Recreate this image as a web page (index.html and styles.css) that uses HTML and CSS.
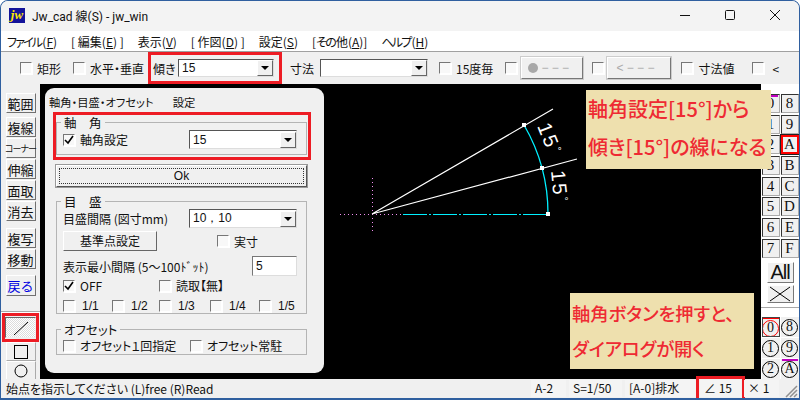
FILE: index.html
```html
<!DOCTYPE html>
<html lang="ja">
<head>
    <meta charset="UTF-8">
    <title>Jw_cad 線(S) - jw_win</title>
    <link rel="stylesheet" href="styles.css">
</head>
<body>
<div class="window">
    <!-- Title bar -->
    <div class="titlebar">
        <span class="app-icon">jw</span>
        <span class="title-text">Jw_cad 線(S) - jw_win</span>
        <div class="win-controls">
            <svg width="12" height="12" viewBox="0 0 12 12"><path d="M1 6.5h10" stroke="#111" fill="none"/></svg>
            <svg width="12" height="12" viewBox="0 0 12 12"><rect x="1.5" y="1.5" width="9" height="9" rx="1" stroke="#111" fill="none"/></svg>
            <svg width="12" height="12" viewBox="0 0 12 12"><path d="M1 1l10 10M11 1L1 11" stroke="#111" fill="none"/></svg>
        </div>
    </div>

    <!-- Menu -->
    <div class="menubar">
        <span><span class="kana">ファイル</span>(<u>F</u>)</span>
        <span>[ 編集(<u>E</u>) ]</span>
        <span>表示(<u>V</u>)</span>
        <span>[ 作図(<u>D</u>) ]</span>
        <span>設定(<u>S</u>)</span>
        <span>[<span class="kana">その</span>他(<u>A</u>)]</span>
        <span><span class="kana">ヘルプ</span>(<u>H</u>)</span>
    </div>

    <!-- Tool options -->
    <div class="toolbar">
        <label class="check tb-rect"><span class="cb"></span>矩形</label>
        <label class="check tb-horiz"><span class="cb"></span>水平・垂直</label>
        <div class="hl-tilt">
            <span>傾き</span>
            <div class="combo combo-tilt"><span class="combo-value">15</span><span class="combo-arrow"></span></div>
        </div>
        <span class="tb-size">寸法</span>
        <div class="combo combo-size"><span class="combo-value"></span><span class="combo-arrow"></span></div>
        <label class="check tb-15"><span class="cb"></span>15度毎</label>
        <span class="cb tb-c1"></span>
        <div class="gray-btn gb-1"><i class="dot"></i>− − −</div>
        <span class="cb tb-c2"></span>
        <div class="gray-btn gb-2">&lt; − − −</div>
        <label class="check tb-val"><span class="cb"></span>寸法値</label>
        <label class="check tb-lt"><span class="cb"></span>&lt;</label>
    </div>

    <div class="main">
        <!-- Left tools -->
        <div class="left-tools">
            <div class="tool-btn tool-first">範囲</div>
            <div class="tool-group">
                <div class="tool-btn">複線</div>
                <div class="tool-btn tool-narrow">コーナー</div>
                <div class="tool-btn">伸縮</div>
                <div class="tool-btn">面取</div>
                <div class="tool-btn">消去</div>
            </div>
            <div class="tool-group">
                <div class="tool-btn">複写</div>
                <div class="tool-btn">移動</div>
            </div>
            <div class="tool-btn tool-back">戻る</div>
            <div class="tool-sep"></div>
            <div class="draw-tools">
                <div class="hl-line">
                    <div class="draw-btn draw-active">
                        <svg width="20" height="16" viewBox="0 0 20 16"><path d="M3 15L17 2" stroke="#000" fill="none"/></svg>
                    </div>
                </div>
                <div class="draw-btn">
                    <svg width="16" height="14" viewBox="0 0 16 14"><rect x="1.5" y="0.5" width="13" height="13" stroke="#000" fill="none"/></svg>
                </div>
                <div class="draw-btn">
                    <svg width="16" height="14" viewBox="0 0 16 14"><circle cx="8" cy="7" r="6" stroke="#000" fill="none"/></svg>
                </div>
            </div>
        </div>

        <!-- Drawing area -->
        <div class="canvas">
            <svg class="drawing" width="721" height="294" viewBox="40 84 721 294">
                <path d="M340 214.5H403M372.5 178V234" stroke="#f08ff0" stroke-dasharray="1 3" fill="none"/>
                <path d="M372 214L553 109M372 214L577 159" stroke="#fff" stroke-width="1.2" fill="none"/>
                <path d="M403 214.5H548" stroke="#00f0ff" stroke-dasharray="24 2 2 2" fill="none"/>
                <path d="M548 214A176 176 0 0 0 524 125" stroke="#00f0ff" stroke-width="1.3" fill="none"/>
                <path d="M522 123h4v4h-4zM540 166h4v4h-4zM546 212h4v4h-4z" fill="#fff"/>
                <text class="dim" transform="translate(537 126) rotate(68)">15<tspan class="deg" dy="-7" dx="1">°</tspan></text>
                <text class="dim" transform="translate(551 171) rotate(84)">15<tspan class="deg" dy="-7" dx="1">°</tspan></text>
            </svg>

            <!-- Dialog -->
            <div class="dialog">
                <div class="dialog-title"><span>軸角・目盛・オフセット</span><span>設定</span></div>

                <div class="hl-group">
                    <fieldset class="group group-angle">
                        <legend>軸　角</legend>
                        <div class="row row-angle">
                            <label class="check"><span class="cb"><svg width="10" height="10" viewBox="0 0 10 10"><path d="M1 5l3 3 5-7" stroke="#000" stroke-width="1.6" fill="none"/></svg></span>軸角設定</label>
                            <div class="combo combo-dlg"><span class="combo-value">15</span><span class="combo-arrow"></span></div>
                        </div>
                    </fieldset>
                </div>

                <div class="ok-btn"><span>Ok</span></div>

                <fieldset class="group group-scale">
                    <legend>目　盛</legend>
                    <div class="row">
                        <span>目盛間隔 (図寸mm)</span>
                        <div class="combo combo-dlg"><span class="combo-value">10，10</span><span class="combo-arrow"></span></div>
                    </div>
                    <div class="row row-base">
                        <div class="base-btn">基準点設定</div>
                        <label class="check check-real"><span class="cb"></span>実寸</label>
                    </div>
                    <div class="row row-min">
                        <span>表示最小間隔 (5～100ﾄﾞｯﾄ)</span>
                        <div class="text-input">5</div>
                    </div>
                    <div class="row row-off">
                        <label class="check check-off"><span class="cb"><svg width="10" height="10" viewBox="0 0 10 10"><path d="M1 5l3 3 5-7" stroke="#000" stroke-width="1.6" fill="none"/></svg></span>OFF</label>
                        <label class="check"><span class="cb"></span>読取【無】</label>
                    </div>
                    <div class="row-ratio">
                        <label class="check"><span class="cb"></span>1/1</label>
                        <label class="check"><span class="cb"></span>1/2</label>
                        <label class="check"><span class="cb"></span>1/3</label>
                        <label class="check"><span class="cb"></span>1/4</label>
                        <label class="check"><span class="cb"></span>1/5</label>
                    </div>
                </fieldset>

                <fieldset class="group group-offset">
                    <legend>オフセット</legend>
                    <div class="row row-offset">
                        <label class="check check-once"><span class="cb"></span>オフセット１回指定</label>
                        <label class="check"><span class="cb"></span>オフセット常駐</label>
                    </div>
                </fieldset>
            </div>
        </div>

        <!-- Right tools -->
        <div class="right-tools">
            <div class="layer-grid">
                <div class="layer-btn has-bar">0</div><div class="layer-btn">8</div>
                <div class="layer-btn">1</div><div class="layer-btn">9</div>
                <div class="layer-btn">2</div><div class="layer-btn layer-on">A</div>
                <div class="layer-btn">3</div><div class="layer-btn">B</div>
                <div class="layer-btn">4</div><div class="layer-btn">C</div>
                <div class="layer-btn">5</div><div class="layer-btn">D</div>
                <div class="layer-btn">6</div><div class="layer-btn">E</div>
                <div class="layer-btn">7</div><div class="layer-btn">F</div>
            </div>
            <div class="big-btn big-all">All</div>
            <div class="big-btn">
                <svg width="22" height="16" viewBox="0 0 22 16"><path d="M1 1l10 7 10-7M1 15l10-7 10 7" stroke="#000" fill="none"/></svg>
            </div>
            <div class="tool-sep"></div>
            <div class="group-grid">
                <div class="circ-btn circ-on"><span>0</span></div><div class="circ-btn"><span>8</span></div>
                <div class="circ-btn"><span>1</span></div><div class="circ-btn"><span>9</span></div>
                <div class="circ-btn"><span>2</span></div><div class="circ-btn circ-bar"><span>A</span></div>
            </div>
        </div>

        <!-- Notes laid over the screen -->
        <div class="note note-top">
            <p>軸角設定[15°]から</p>
            <p>傾き[15°]の線になる</p>
        </div>
        <div class="note note-bottom">
            <p>軸角ボタンを押すと、</p>
            <p>ダイアログが開く</p>
        </div>
    </div>

    <!-- Status bar -->
    <div class="statusbar">
        <span class="status-msg">始点を指示してください (L)free (R)Read</span>
        <span class="st st-layer">A-2</span>
        <span class="st st-scale">S=1/50</span>
        <span class="st st-name">[A-0]排水</span>
        <span class="st st-angle">∠ 15</span>
        <span class="st st-mult">× 1</span>
        <svg class="grip" width="13" height="13" viewBox="0 0 13 13"><path d="M12 1L1 12M12 5L5 12M12 9L9 12" stroke="#909090" stroke-width="1.5" fill="none"/></svg>
    </div>
</div>
</body>
</html>
```

FILE: styles.css
```css
* {
    box-sizing: border-box;
}

body {
    margin: 0;
    background: #fff;
    font-family: "Noto Sans CJK JP", "Liberation Sans", sans-serif;
    font-size: 12px;
    color: #111;
    font-feature-settings: "palt";
}

.window {
    width: 800px;
    height: 400px;
    display: flex;
    flex-direction: column;
    overflow: hidden;
    background: #f0f0f0;
    border: 1px solid #2f5f9f;
    border-bottom-width: 2px;
    border-radius: 8px 8px 0 0;
}

/* Title bar */
.titlebar {
    height: 30px;
    flex: none;
    display: flex;
    align-items: center;
    padding: 0 0 2px 8px;
    background: #f3f3f3;
}

.app-icon {
    width: 16px;
    height: 15px;
    background: #14149a;
    color: #ffe800;
    font: italic bold 13px/13px "Liberation Serif", serif;
    text-align: center;
}

.title-text {
    margin-left: 7px;
    font-family: Roboto, "Noto Sans CJK JP", sans-serif;
    font-size: 12px;
}

.win-controls {
    margin-left: auto;
    margin-right: 18px;
    display: flex;
    gap: 33px;
}

/* Menu */
.menubar {
    height: 21px;
    flex: none;
    display: flex;
    align-items: center;
    gap: 14px;
    padding-left: 6px;
    background: #fff;
    border-bottom: 1px solid #a0a0a0;
}

.kana {
    letter-spacing: -1.8px;
    margin-right: 1px;
}

/* Toolbar */
.toolbar {
    height: 32px;
    flex: none;
    display: flex;
    align-items: center;
    font-size: 12px;
    white-space: nowrap;
}

.check {
    display: flex;
    align-items: center;
    gap: 5px;
    white-space: nowrap;
}

.cb {
    width: 12px;
    height: 12px;
    flex: none;
    display: flex;
    align-items: center;
    justify-content: center;
    background: #f8f8f8;
    border: 1px solid;
    border-color: #777 #fff #fff #777;
    box-shadow: 1px 1px 0 #fff;
}

.tb-rect { margin-left: 19px; }
.tb-horiz { margin-left: 12px; }

.hl-tilt {
    height: 32px;
    width: 134px;
    flex: none;
    margin-left: 4px;
    display: flex;
    align-items: center;
    justify-content: space-between;
    padding: 0 5px 0 2px;
    border: 3px solid #ed1c24;
}

.combo {
    flex: none;
    display: flex;
    align-items: center;
    justify-content: space-between;
    height: 18px;
    background: #fff;
    border: 1px solid;
    border-color: #555 #ddd #ddd #555;
    font-family: "Liberation Sans", sans-serif;
    font-size: 12px;
}

.combo-value {
    padding-left: 3px;
}

.combo-arrow {
    width: 16px;
    height: 16px;
    display: flex;
    align-items: center;
    justify-content: center;
    background: #f0f0f0;
    border: 1px solid;
    border-color: #fff #666 #666 #fff;
}

.combo-arrow::after {
    content: "";
    border: 4px solid transparent;
    border-top: 4px solid #000;
    border-bottom: 0;
}

.combo-tilt { width: 96px; }
.combo-size { width: 108px; margin-left: 6px; }
.tb-size { margin-left: 8px; }
.tb-15 { margin-left: 11px; }
.tb-c1 { margin-left: 12px; }
.tb-c2 { margin-left: 9px; }
.tb-val { margin-left: 10px; }
.tb-lt { margin-left: 18px; gap: 8px; }

.gray-btn {
    height: 22px;
    flex: none;
    margin-left: 4px;
    display: flex;
    align-items: center;
    gap: 3px;
    padding-left: 6px;
    color: #aaa;
    border: 1px solid;
    border-color: #fff #777 #777 #fff;
    box-shadow: 0 0 0 1px #ccc;
    font-family: "Liberation Sans", sans-serif;
}

.gb-1 { width: 62px; }
.gb-2 { width: 64px; padding-left: 8px; margin-left: 3px; }

.dot {
    width: 10px;
    height: 10px;
    background: #a8a8a8;
    border-radius: 50%;
}

/* Main area */
.main {
    position: relative;
    flex: 1;
    min-height: 0;
    display: flex;
}

.left-tools {
    width: 39px;
    flex: none;
    padding-top: 9px;
    display: flex;
    flex-direction: column;
    align-items: center;
    overflow: hidden;
}

.tool-btn {
    width: 30px;
    height: 20px;
    flex: none;
    display: flex;
    align-items: center;
    justify-content: center;
    background: #f0f0f0;
    border: 1px solid;
    border-color: #fff #707070 #707070 #fff;
    font-size: 13px;
    font-feature-settings: normal;
    line-height: 1;
    white-space: nowrap;
}

.tool-narrow {
    font-size: 9px;
    font-feature-settings: "palt";
    letter-spacing: -1px;
}

.tool-group {
    margin-top: 4px;
    display: flex;
    flex-direction: column;
    gap: 1px;
}

.tool-group + .tool-group {
    margin-top: 7px;
}

.tool-back {
    margin-top: 6px;
    height: 21px;
    color: #0000e0;
}

.tool-sep {
    width: 100%;
    flex: none;
    height: 2px;
    margin-top: 15px;
    border-top: 1px solid #a8a8a8;
    border-bottom: 1px solid #fff;
}

.draw-tools {
    width: 100%;
    display: flex;
    flex-direction: column;
    align-items: center;
}

.hl-line {
    width: 37px;
    height: 29px;
    flex: none;
    display: flex;
    align-items: center;
    justify-content: center;
    border: 3px solid #ed1c24;
}

.draw-btn {
    width: 30px;
    height: 19px;
    flex: none;
    display: flex;
    align-items: center;
    justify-content: center;
    border: 1px solid;
    border-color: #fff #aaa #aaa #fff;
}

.draw-active {
    width: 31px;
    height: 21px;
    border-color: #666 #eee #eee #666;
    background: repeating-conic-gradient(#fff 0 25%, #dcdcdc 0 50%) 0 0 / 2px 2px;
}

.canvas {
    position: relative;
    width: 721px;
    flex: none;
    background: #000;
}

.drawing {
    position: absolute;
    left: 0;
    top: 0;
}

.dim {
    fill: #fff;
    font-family: "Liberation Sans", sans-serif;
    font-size: 20px;
    letter-spacing: 2px;
}

.deg {
    font-size: 10px;
}

/* Dialog */
.dialog {
    position: absolute;
    left: 5px;
    top: 4px;
    width: 279px;
    height: 285px;
    padding: 5px 16px 0 11px;
    background: #f0f0f0;
    border-radius: 9px;
}

.dialog-title {
    height: 18px;
    display: flex;
    align-items: center;
    gap: 19px;
    margin-left: -7px;
    font-size: 11.3px;
}

.hl-group {
    width: 258px;
    height: 48px;
    margin: 1px 0 0 -3px;
    padding: 7px 0 0 3px;
    border: 3px solid #ed1c24;
}

.group {
    margin: 0;
    padding: 0 6px;
    width: 251px;
    min-width: 0;
    border: 1px solid #b4b4b4;
}

.group legend {
    padding: 0 3px;
    margin-left: -2px;
    font-size: 12.5px;
    font-feature-settings: normal;
    line-height: 12px;
    height: 11px;
}

.group-offset legend {
    font-feature-settings: "palt";
}

.hl-group .group {
    margin: -5px 0 0 -3px;
    height: 38px;
}

.row {
    display: flex;
    align-items: center;
    justify-content: space-between;
    padding-right: 3px;
    white-space: nowrap;
}

.row-angle {
    margin-top: 2px;
}

.combo-dlg {
    width: 108px;
    height: 19px;
}

.ok-btn {
    width: 251px;
    height: 22px;
    margin-top: 5px;
    padding: 2px;
    background: #f0f0f0;
    border: 1px solid;
    border-color: #fff #555 #555 #fff;
    box-shadow: 0 0 0 1px #999;
    font-family: "Liberation Sans", sans-serif;
}

.ok-btn span {
    display: block;
    height: 100%;
    line-height: 15px;
    text-align: center;
    border: 1px dotted #333;
}

.group-scale {
    height: 118px;
    margin-top: 9px;
    padding-top: 2px;
}

.base-btn {
    width: 94px;
    height: 20px;
    line-height: 18px;
    text-align: center;
    border: 1px solid;
    border-color: #fff #666 #666 #fff;
}

.row-base {
    margin-top: 3px;
    justify-content: flex-start;
}

.check-real {
    margin-left: 60px;
}

.row-min {
    margin-top: 5px;
}

.text-input {
    width: 45px;
    height: 20px;
    padding-left: 3px;
    background: #fff;
    border: 1px solid;
    border-color: #777 #ddd #ddd #777;
    line-height: 18px;
    font-family: "Liberation Sans", sans-serif;
}

.row-off {
    margin-top: 1px;
    justify-content: flex-start;
}

.check-off {
    width: 96px;
}

.row-ratio {
    margin-top: 5px;
    display: grid;
    grid-template-columns: 49px 47px 51px 49px 40px;
    font-family: "Liberation Sans", sans-serif;
}

.row-ratio .check {
    gap: 7px;
}

.group-offset {
    height: 31px;
    margin-top: 10px;
}

.row-offset {
    justify-content: flex-start;
    margin-top: 2px;
}

.check-once {
    width: 127px;
}

/* Right tools */
.right-tools {
    flex: 1;
    background: #fff;
    display: flex;
    flex-direction: column;
    align-items: center;
    padding-top: 10px;
    overflow: hidden;
}

.layer-grid,
.group-grid {
    display: grid;
    grid-template-columns: 18px 18px;
    column-gap: 1px;
}

.layer-grid {
    grid-auto-rows: 19px;
    row-gap: 1.7px;
}

.layer-btn {
    position: relative;
    display: flex;
    align-items: center;
    justify-content: center;
    background: #f0f0f0;
    border: 1px solid;
    border-color: #333 #aaa #aaa #333;
    font: 15px "Liberation Serif", serif;
}

.has-bar::before,
.circ-bar::before {
    content: "";
    position: absolute;
    left: 1px;
    right: 1px;
    top: 0;
    height: 2px;
    background: #c000c0;
}

.layer-on {
    border: 2px solid #f00;
    outline: 1px solid #222;
}

.big-btn {
    width: 27px;
    height: 21px;
    margin-top: 2px;
    display: flex;
    align-items: center;
    justify-content: center;
    background: #f0f0f0;
    border: 1px solid;
    border-color: #fff #777 #777 #fff;
}

.big-all {
    font: 20px "Liberation Sans", sans-serif;
    letter-spacing: -1px;
}

.layer-grid + .big-btn {
    margin-top: 4px;
}

.right-tools .tool-sep {
    margin-top: 4px;
}

.group-grid {
    margin-top: 8px;
    grid-auto-rows: 20px;
    row-gap: 1px;
}

.circ-btn {
    position: relative;
    display: flex;
    align-items: center;
    justify-content: center;
    background: #f0f0f0;
    font: 14px "Liberation Serif", serif;
}

.circ-btn span {
    width: 17px;
    height: 17px;
    display: flex;
    align-items: center;
    justify-content: center;
    border: 1px solid #000;
    border-radius: 50%;
}

.circ-on {
    border-top: 2px solid #f00;
    outline: 1px solid #444;
    outline-offset: -1px;
}

.circ-on span {
    border-color: #f00;
}

/* Notes */
.note {
    position: absolute;
    background: #eee0ae;
    color: #ee2a33;
    font-weight: 500;
    line-height: 24px;
}

.note p {
    margin: 0;
    white-space: nowrap;
}

.note-top {
    left: 585px;
    top: 6px;
    width: 185px;
    height: 79px;
    padding: 7px 0 0 2px;
    display: flex;
    flex-direction: column;
    gap: 14px;
    font-size: 20px;
}

.note-bottom {
    left: 569px;
    top: 209px;
    width: 184px;
    height: 76px;
    padding: 8px 0 0 2px;
    display: flex;
    flex-direction: column;
    gap: 11px;
    font-size: 18.3px;
}

/* Status bar */
.statusbar {
    position: relative;
    height: 19px;
    flex: none;
    display: flex;
    align-items: center;
    gap: 3px;
    padding-left: 5px;
    white-space: nowrap;
}

.status-msg {
    width: 522px;
}

.st {
    height: 17px;
    line-height: 16px;
    padding-left: 4px;
    background: #f4f4f4;
}

.st-layer { width: 35px; }
.st-scale { width: 53px; }
.st-name { width: 71px; }

.st-angle {
    width: 41px;
    margin-left: 1px;
    outline: 3px solid #ed1c24;
    outline-offset: 1px;
}

.st-mult { width: 35px; }

.grip {
    position: absolute;
    right: 1px;
    bottom: 0;
    z-index: 1;
}
```
